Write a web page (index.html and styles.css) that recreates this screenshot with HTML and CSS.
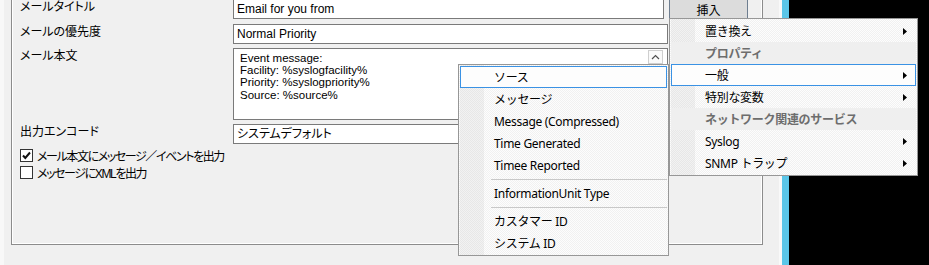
FILE: index.html
```html
<!DOCTYPE html>
<html lang="ja">
<head>
  <meta charset="UTF-8" />
  <title>メール設定</title>
  <link rel="stylesheet" href="styles.css">
</head>
<body>
  <div class="screen">
    <div class="window">
      <div class="group">
        <div class="form">
          <div class="lbl">メールタイトル</div>
          <div class="field-row">
            <div class="field short">Email for you from</div>
            <button class="btn pressed">挿入</button>
          </div>

          <div class="lbl">メールの優先度</div>
          <div class="field">Normal Priority</div>

          <div class="lbl">メール本文</div>
          <div class="field memo">
            <div>Event message:</div>
            <div>Facility: %syslogfacility%</div>
            <div>Priority: %syslogpriority%</div>
            <div>Source: %source%</div>
            <span class="scroll-up">
              <svg width="9" height="6" viewBox="0 0 9 6"><path d="M1 5 L4.5 1.5 L8 5" fill="none" stroke="#505050" stroke-width="1.2"/></svg>
            </span>
          </div>

          <div class="lbl">出力エンコード</div>
          <div class="field">システムデフォルト</div>
        </div>

        <div class="checks">
          <div class="check">
            <span class="box">
              <svg width="11" height="11" viewBox="0 0 11 11"><path d="M2 5.5 L4.3 8 L9 2.5" fill="none" stroke="#111" stroke-width="2"/></svg>
            </span>
            <span class="check-text">メール本文にメッセージ／イベントを出力</span>
          </div>
          <div class="check">
            <span class="box"></span>
            <span class="check-text">メッセージにXMLを出力</span>
          </div>
        </div>
      </div>
    </div>
    <div class="edge"></div>
    <div class="desktop"></div>

    <!-- 挿入 menu -->
    <div class="menu insert-menu">
      <div class="item">置き換え<svg class="arrow" width="4" height="7" viewBox="0 0 4 7"><path d="M0 0 L4 3.5 L0 7Z"/></svg></div>
      <div class="item header">プロパティ</div>
      <div class="item active">一般<svg class="arrow" width="4" height="7" viewBox="0 0 4 7"><path d="M0 0 L4 3.5 L0 7Z"/></svg></div>
      <div class="item">特別な変数<svg class="arrow" width="4" height="7" viewBox="0 0 4 7"><path d="M0 0 L4 3.5 L0 7Z"/></svg></div>
      <div class="item header">ネットワーク関連のサービス</div>
      <div class="item">Syslog<svg class="arrow" width="4" height="7" viewBox="0 0 4 7"><path d="M0 0 L4 3.5 L0 7Z"/></svg></div>
      <div class="item">SNMP トラップ<svg class="arrow" width="4" height="7" viewBox="0 0 4 7"><path d="M0 0 L4 3.5 L0 7Z"/></svg></div>
    </div>

    <!-- 一般 submenu -->
    <div class="menu sub-menu">
      <div class="item active">ソース</div>
      <div class="item">メッセージ</div>
      <div class="item">Message (Compressed)</div>
      <div class="item">Time Generated</div>
      <div class="item">Timee Reported</div>
      <div class="sep"></div>
      <div class="item">InformationUnit Type</div>
      <div class="sep"></div>
      <div class="item">カスタマー ID</div>
      <div class="item">システム ID</div>
    </div>
  </div>
</body>
</html>
```

FILE: styles.css
```css
body {
  margin: 0;
  overflow: hidden;
  background: #000;
  font-family: "Liberation Sans", "Noto Sans CJK JP", sans-serif;
  font-size: 12px;
  color: #000;
}
.screen {
  position: relative;
  display: flex;
  height: 265px;
}
.window {
  width: 782px;
  background: linear-gradient(to right, #f8f8f8 4px, #f0f0f0 4px, #f0f0f0 779px, #f9f9f9 779px);
  overflow: hidden;
}
.edge {
  width: 7px;
  background: #5bc6e8;
}
.desktop {
  flex: 1;
  background: #000;
}

/* group box */
.group {
  box-sizing: border-box;
  margin: -10px 0 0 11px;
  width: 752px;
  height: 255px;
  padding: 8px 0 0 8px;
  border: 1px solid #8c8c8c;
  box-shadow: inset 1px 0 0 #fff, inset -3px -3px 0 -2px #fff;
  font-feature-settings: "palt" 1;
}
.form {
  display: grid;
  grid-template-columns: 213px auto;
  row-gap: 4px;
}
.lbl {
  line-height: 14px;
  padding-top: 1px;
}
.field-row {
  display: flex;
  gap: 5px;
}
.field {
  box-sizing: border-box;
  width: 435px;
  height: 20px;
  padding: 0 3px;
  line-height: 18px;
  background: #fff;
  border: 1px solid #7a7a7a;
  white-space: nowrap;
}
.field.short {
  width: 431px;
}
.field.memo {
  position: relative;
  height: 72px;
  padding: 3px 6px;
  font-size: 11.5px;
  line-height: 12.2px;
}
.scroll-up {
  position: absolute;
  top: 1px;
  right: 4px;
  width: 15px;
  height: 14px;
  box-sizing: border-box;
  border: 1px solid #cfcfcf;
  background: #fafafa;
  display: flex;
  align-items: center;
  justify-content: center;
}
.btn {
  box-sizing: border-box;
  width: 79px;
  height: 21px;
  padding: 0;
  font: inherit;
  background: #dcdcdc;
  border: 1px solid #6e7e90;
}

.checks {
  margin-top: 3px;
}
.check {
  display: flex;
  align-items: center;
  gap: 4px;
  height: 17px;
}
.check-text {
  letter-spacing: -1.4px;
}
.box {
  box-sizing: border-box;
  width: 13px;
  height: 13px;
  border: 1px solid #333;
  background: #fff;
  display: flex;
  align-items: center;
  justify-content: center;
}

/* popup menus */
.menu {
  position: absolute;
  box-sizing: border-box;
  padding: 1px;
  border: 1px solid #979797;
  font-family: "Noto Sans", "Noto Sans CJK JP", sans-serif;
  font-size: 12px;
  letter-spacing: -0.3px;
  background:
    linear-gradient(to right, transparent 1px, rgba(0,0,0,0.045) 1px, rgba(0,0,0,0.045) 25px, transparent 25px),
    repeating-conic-gradient(#fdfdfd 0 25%, #f1f1f1 0 50%) 0 0 / 2px 2px;
}
.insert-menu {
  left: 669px;
  top: 18px;
  width: 249px;
  height: 158px;
}
.sub-menu {
  left: 458px;
  top: 64px;
  width: 211px;
  height: 192px;
}
.item {
  box-sizing: border-box;
  height: 22px;
  display: flex;
  align-items: center;
  justify-content: space-between;
  padding: 0 9px 0 34px;
  white-space: nowrap;
}
.item.active {
  border: 1px solid #3a92e4;
  padding-left: 33px;
  padding-right: 8px;
  background: #fdfdfd;
}
.item.header {
  background: #efefef;
  color: #6d6d6d;
  font-weight: bold;
}
.arrow {
  fill: #000;
}
.sep {
  height: 6px;
  padding-top: 3px;
  box-sizing: border-box;
}
.sep::before {
  content: "";
  display: block;
  margin-left: 31px;
  border-top: 1px solid #c8c8c8;
}
```
